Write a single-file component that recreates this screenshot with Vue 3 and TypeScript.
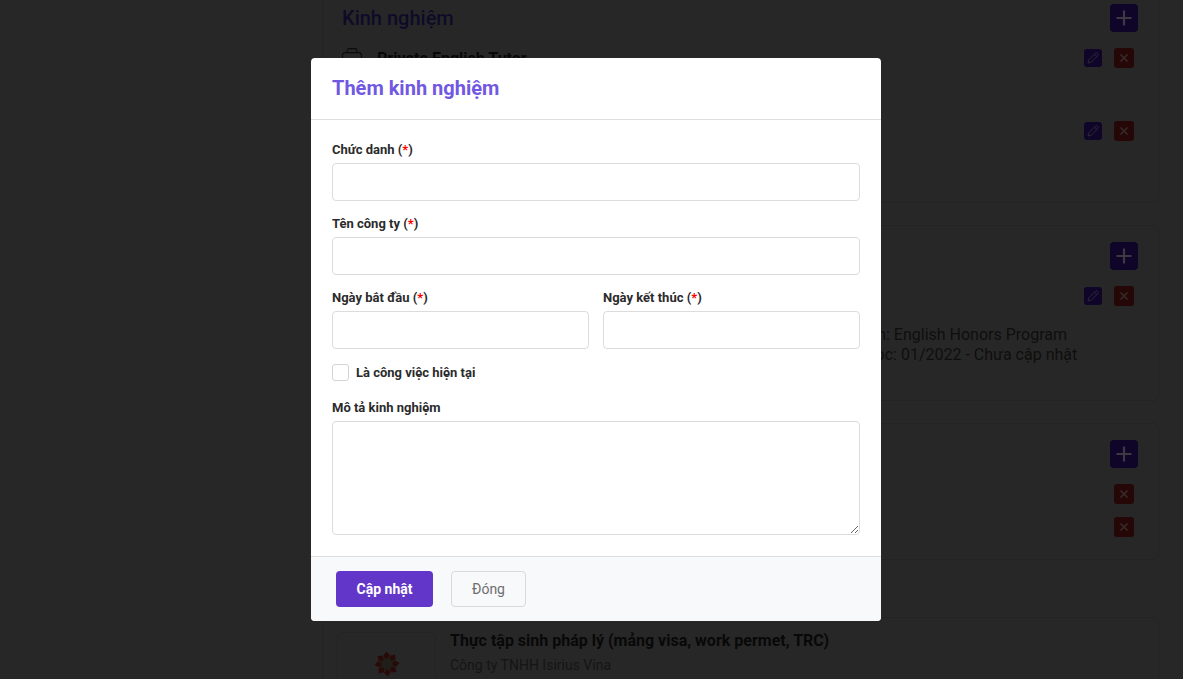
<script setup lang="ts">
interface Field {
  label: string
}
const topFields: Field[] = [{ label: 'Chức danh' }, { label: 'Tên công ty' }]
const dateFields: Field[] = [{ label: 'Ngày bắt đầu' }, { label: 'Ngày kết thúc' }]
const petals: number[] = [0, 45, 90, 135, 180, 225, 270, 315]
</script>

<template>
  <div class="viewport">
    <main class="page">
      <section class="card card-exp">
        <header class="card-head">
          <h2>Kinh nghiệm</h2>
          <button class="btn-add" type="button" aria-label="Thêm">
            <svg viewBox="0 0 28 28" width="28" height="28"><path d="M14 6.5v15M6.5 14h15" /></svg>
          </button>
        </header>
        <div class="item item-one">
          <svg class="bag" viewBox="0 0 20 20" width="20" height="20">
            <rect x="0.6" y="4.6" width="18.8" height="15" rx="2.4" />
            <path d="M5 4.6V3C5 1.6 6 .6 7.4.6h5.2C14 .6 15 1.6 15 3v1.6" />
          </svg>
          <strong class="item-title">Private English Tutor</strong>
          <div class="actions">
            <button class="btn-edit" type="button" aria-label="Sửa">
              <svg viewBox="0 0 18 18" width="18" height="18"><path d="M4 14l.8-3.2 6.7-6.7a1.2 1.2 0 0 1 1.7 0l.7.7a1.2 1.2 0 0 1 0 1.7l-6.7 6.7zM10.4 5.2l2.4 2.4" /></svg>
            </button>
            <button class="btn-del" type="button" aria-label="Xoá">
              <svg viewBox="0 0 20 20" width="20" height="20"><path d="M6.5 6.5l7 7M13.5 6.5l-7 7" /></svg>
            </button>
          </div>
        </div>
        <div class="item item-two">
          <div class="actions">
            <button class="btn-edit" type="button" aria-label="Sửa">
              <svg viewBox="0 0 18 18" width="18" height="18"><path d="M4 14l.8-3.2 6.7-6.7a1.2 1.2 0 0 1 1.7 0l.7.7a1.2 1.2 0 0 1 0 1.7l-6.7 6.7zM10.4 5.2l2.4 2.4" /></svg>
            </button>
            <button class="btn-del" type="button" aria-label="Xoá">
              <svg viewBox="0 0 20 20" width="20" height="20"><path d="M6.5 6.5l7 7M13.5 6.5l-7 7" /></svg>
            </button>
          </div>
        </div>
      </section>

      <section class="card card-edu">
        <header class="card-head">
          <h2>Học vấn</h2>
          <button class="btn-add" type="button" aria-label="Thêm">
            <svg viewBox="0 0 28 28" width="28" height="28"><path d="M14 6.5v15M6.5 14h15" /></svg>
          </button>
        </header>
        <div class="item">
          <div class="actions">
            <button class="btn-edit" type="button" aria-label="Sửa">
              <svg viewBox="0 0 18 18" width="18" height="18"><path d="M4 14l.8-3.2 6.7-6.7a1.2 1.2 0 0 1 1.7 0l.7.7a1.2 1.2 0 0 1 0 1.7l-6.7 6.7zM10.4 5.2l2.4 2.4" /></svg>
            </button>
            <button class="btn-del" type="button" aria-label="Xoá">
              <svg viewBox="0 0 20 20" width="20" height="20"><path d="M6.5 6.5l7 7M13.5 6.5l-7 7" /></svg>
            </button>
          </div>
        </div>
        <div class="edu-text">
          <p>Chuyên ngành: English Honors Program</p>
          <p>Thời gian học: 01/2022 - Chưa cập nhật</p>
        </div>
      </section>

      <section class="card card-skill">
        <header class="card-head">
          <h2>Kỹ năng</h2>
          <button class="btn-add" type="button" aria-label="Thêm">
            <svg viewBox="0 0 28 28" width="28" height="28"><path d="M14 6.5v15M6.5 14h15" /></svg>
          </button>
        </header>
        <div class="skill-rows">
          <button v-for="n in 2" :key="n" class="btn-del" type="button" aria-label="Xoá">
            <svg viewBox="0 0 20 20" width="20" height="20"><path d="M6.5 6.5l7 7M13.5 6.5l-7 7" /></svg>
          </button>
        </div>
      </section>

      <section class="card card-job">
        <div class="logo-box">
          <svg viewBox="0 0 26 26" width="26" height="26">
            <circle class="core" cx="13" cy="13" r="7" />
            <g v-for="p in petals" :key="p" :transform="`rotate(${p} 13 13)`">
              <path class="petal" d="M12 .6l4 3.4-2 3.4-2.6.2-2-2.6z" />
            </g>
          </svg>
        </div>
        <div class="job-text">
          <h3>Thực tập sinh pháp lý (mảng visa, work permet, TRC)</h3>
          <p>Công ty TNHH Isirius Vina</p>
        </div>
      </section>
    </main>

    <div class="backdrop">
      <form class="modal" @submit.prevent>
        <header class="modal-head">
          <h1>Thêm kinh nghiệm</h1>
        </header>
        <div class="modal-body">
          <div v-for="f in topFields" :key="f.label" class="field">
            <label>{{ f.label }} (<span class="req">*</span>)</label>
            <input type="text" />
          </div>
          <div class="date-row">
            <div v-for="f in dateFields" :key="f.label" class="field">
              <label>{{ f.label }} (<span class="req">*</span>)</label>
              <input type="text" />
            </div>
          </div>
          <label class="check">
            <input type="checkbox" />
            <span class="box"></span>
            <span>Là công việc hiện tại</span>
          </label>
          <div class="field last">
            <label>Mô tả kinh nghiệm</label>
            <textarea></textarea>
          </div>
        </div>
        <footer class="modal-foot">
          <button class="btn-save" type="submit">Cập nhật</button>
          <button class="btn-close" type="button">Đóng</button>
        </footer>
      </form>
    </div>
  </div>
</template>

<style>
html,
body {
  margin: 0;
  overflow: hidden;
  background: #4f4f4f;
}
</style>

<style scoped>
.viewport {
  position: relative;
  height: 679px;
  width: 1183px;
  overflow: hidden;
  font-family: Roboto, 'Noto Sans', sans-serif;
}
.page {
  background: #4f4f4f;
  padding: 0 24px 0 322px;
  margin-top: -13px;
  display: flex;
  flex-direction: column;
  gap: 22px;
  box-sizing: border-box;
}
.card {
  box-sizing: border-box;
  border: 1px solid #474747;
  border-radius: 6px;
  padding: 16px 20px 0 19px;
}
.card-exp {
  height: 216px;
}
.card-edu {
  height: 176px;
}
.card-skill {
  height: 137px;
}
.card-job {
  height: 140px;
  margin-top: 35px;
  padding: 14px 20px 0 14px;
  display: flex;
  gap: 14px;
}
.card-head {
  display: flex;
  justify-content: space-between;
  align-items: center;
  height: 28px;
}
.card-head h2 {
  margin: 0;
  font-size: 20px;
  font-weight: 500;
  color: #1c1650;
}
.btn-add,
.btn-edit,
.btn-del {
  padding: 0;
  border: 0;
  display: block;
}
.btn-add {
  width: 28px;
  height: 28px;
  border-radius: 4px;
  background: #1e0a50;
}
.btn-add svg {
  display: block;
  fill: none;
  stroke: #7a7288;
  stroke-width: 2.2;
}
.btn-edit {
  width: 18px;
  height: 18px;
  border-radius: 3px;
  background: #1e0a50;
}
.btn-edit svg {
  display: block;
  fill: none;
  stroke: #5a5070;
  stroke-width: 1;
}
.btn-del {
  width: 20px;
  height: 20px;
  border-radius: 3px;
  background: #4a0e0e;
}
.btn-del svg {
  display: block;
  fill: none;
  stroke: #705454;
  stroke-width: 1.6;
}
.item {
  position: relative;
  display: flex;
  align-items: flex-start;
  margin-top: 16px;
  height: 20px;
}
.item-two {
  margin-top: 53px;
}
.bag {
  flex: none;
  fill: none;
  stroke: #161616;
  stroke-width: 1.1;
}
.item-title {
  margin-left: 15px;
  margin-top: 1px;
  font-size: 16px;
  font-weight: 700;
  color: #111;
}
.actions {
  margin-left: auto;
  margin-right: 4px;
  display: flex;
  gap: 12px;
  align-items: flex-start;
}
.actions .btn-edit {
  margin-top: 1px;
}
.edu-text {
  margin: 19px 0 0 443px;
  font-size: 16px;
  line-height: 20px;
  color: #1d1d1d;
}
.edu-text p {
  margin: 0;
}
.edu-text p:last-child {
  margin-left: 12px;
}
.skill-rows {
  margin-top: 16px;
  display: flex;
  flex-direction: column;
  align-items: flex-end;
  gap: 13px;
  padding-right: 4px;
}
.logo-box {
  box-sizing: border-box;
  flex: none;
  width: 99px;
  height: 110px;
  border: 1px solid #474747;
  border-radius: 6px;
  display: flex;
  justify-content: center;
  padding-top: 18px;
}
.petal {
  fill: #501410;
}
.core {
  fill: #403c32;
}
.job-text h3 {
  margin: -1px 0 0;
  font-size: 16px;
  line-height: 20px;
  font-weight: 700;
  color: #111;
}
.job-text p {
  margin: 5px 0 0;
  font-size: 14px;
  line-height: 18px;
  color: #2a2a2a;
}

.backdrop {
  position: absolute;
  inset: 0;
  background: rgba(0, 0, 0, 0.5);
  padding: 58px 0 0 311px;
}
.modal {
  width: 570px;
  background: #fff;
  border-radius: 4px;
  overflow: hidden;
}
.modal-head {
  height: 61px;
  display: flex;
  align-items: center;
  padding: 0 21px;
  border-bottom: 1px solid #dedede;
}
.modal-head h1 {
  margin: 0 0 2px;
  font-size: 20px;
  font-weight: 700;
  color: #7158e2;
}
.modal-body {
  padding: 19px 21px 21px;
}
.field {
  display: flex;
  flex-direction: column;
  margin-bottom: 12px;
  min-width: 0;
}
.field label {
  font-size: 13px;
  font-weight: 700;
  line-height: 20px;
  color: #2b2b2b;
  padding-top: 1px;
  margin-bottom: 3px;
}
.field input,
.field textarea {
  display: block;
  box-sizing: border-box;
  width: 100%;
  border: 1px solid #dcdcdc;
  border-radius: 4px;
  background: #fff;
  outline: none;
  font: inherit;
}
.field input {
  height: 38px;
}
.field textarea {
  height: 114px;
}
.field.last {
  margin-bottom: 0;
}
.req {
  color: #ff0000;
}
.date-row {
  display: grid;
  grid-template-columns: 1fr 1fr;
  gap: 14px;
}
.date-row .field {
  margin-bottom: 15px;
}
.check {
  display: flex;
  align-items: center;
  height: 17px;
  gap: 7px;
  margin-bottom: 16px;
  font-size: 13px;
  font-weight: 700;
  color: #2b2b2b;
}
.check input {
  position: absolute;
  opacity: 0;
  width: 0;
  height: 0;
  margin: 0;
}
.box {
  box-sizing: border-box;
  width: 17px;
  height: 17px;
  border: 1px solid #d4d4d4;
  border-radius: 3px;
  background: #fff;
}
.modal-foot {
  display: flex;
  align-items: flex-start;
  gap: 18px;
  height: 50px;
  padding: 14px 25px 0;
  border-top: 1px solid #dedede;
  background: #f8f9fb;
}
.btn-save,
.btn-close {
  height: 36px;
  border-radius: 4px;
  font-family: inherit;
  font-size: 14px;
  cursor: pointer;
  box-sizing: border-box;
}
.btn-save {
  width: 97px;
  border: 0;
  background: #6236c9;
  color: #fff;
  font-weight: 700;
}
.btn-close {
  width: 75px;
  border: 1px solid #d9d9d9;
  background: transparent;
  color: #6e6e6e;
  font-weight: 400;
}
</style>
